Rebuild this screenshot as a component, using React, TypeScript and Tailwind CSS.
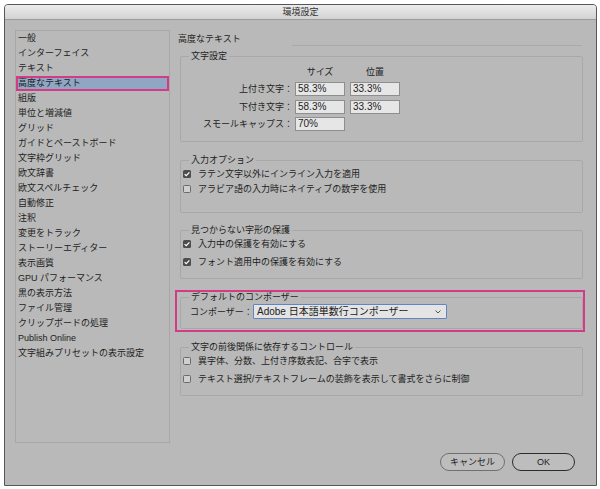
import React from "react";

const listItems = [
  "一般",
  "インターフェイス",
  "テキスト",
  "高度なテキスト",
  "組版",
  "単位と増減値",
  "グリッド",
  "ガイドとペーストボード",
  "文字枠グリッド",
  "欧文辞書",
  "欧文スペルチェック",
  "自動修正",
  "注釈",
  "変更をトラック",
  "ストーリーエディター",
  "表示画質",
  "GPU パフォーマンス",
  "黒の表示方法",
  "ファイル管理",
  "クリップボードの処理",
  "Publish Online",
  "文字組みプリセットの表示設定",
];

function Check({ checked }: { checked: boolean }) {
  if (checked) {
    return (
      <span className="w-[8px] h-[8px] rounded-[1.5px] bg-[#4d4d4d] flex items-center justify-center shrink-0">
        <svg width="8" height="8" viewBox="0 0 8 8">
          <path d="M1.6 4.1 L3.2 5.7 L6.4 2.3" fill="none" stroke="#ffffff" strokeWidth="1.2" />
        </svg>
      </span>
    );
  }
  return <span className="w-[8px] h-[8px] rounded-[1.5px] border border-[#6a6a6a] bg-[#cfcfcf] shrink-0" />;
}

function CheckRow({ checked, label, className }: { checked: boolean; label: string; className?: string }) {
  return (
    <div className={"flex items-center h-[14px] pl-[2px] gap-[7px] " + (className ?? "")}>
      <Check checked={checked} />
      <span className="leading-[14px] whitespace-nowrap">{label}</span>
    </div>
  );
}

function Field({ value }: { value: string }) {
  return (
    <div className="w-[50px] h-[14px] border border-[#8e8e8e] bg-[#e6e6e6] text-[10px] leading-[12px] pl-[2px] text-[#222]">
      {value}
    </div>
  );
}

export default function App() {
  return (
    <div className="w-[600px] h-[489px] bg-white pt-[4px] pl-[4px] font-['Liberation_Sans','Noto_Sans_CJK_JP',sans-serif] text-[9px] text-[#1d1d1d]">
      <div className="w-[593px] h-[482px] border border-[#575757] rounded-t-[4px] bg-[#b9b9b9] flex flex-col overflow-hidden">
        {/* title bar */}
        <div className="h-[15px] shrink-0 bg-gradient-to-b from-[#ececec] to-[#d2d2d2] border-b border-[#9c9c9c] flex items-center justify-center text-[#333] leading-[14px]">
          環境設定
        </div>

        <div className="flex">
          {/* list */}
          <div className="ml-[10px] mt-[10px] w-[155px] h-[413px] border border-[#a7a7a7] flex flex-col">
            {listItems.map((item) =>
              item === "高度なテキスト" ? (
                <div
                  key={item}
                  className="h-[15px] w-[153px] bg-[#8fa7c3] border-2 border-[#d43a86] leading-[11px] pl-[0px] whitespace-nowrap"
                >
                  {item}
                </div>
              ) : (
                <div key={item} className="h-[15px] leading-[15px] pl-[2px] whitespace-nowrap">
                  {item}
                </div>
              )
            )}
          </div>

          {/* right column */}
          <div className="ml-[8px] w-[406px] flex flex-col">
            <div className="mt-[11px] h-[15px] flex items-end">
              <span className="leading-[14px] h-[14px] whitespace-nowrap">高度なテキスト</span>
              <div className="ml-auto mr-[2px] w-[290px] h-px bg-[#a9a9a9]" />
            </div>

            {/* 文字設定 */}
            <fieldset className="mt-[3px] ml-[2px] w-[403px] h-[93px] border border-[#a8a8a8] rounded-[2px] p-0">
              <legend className="ml-[8px] px-[2px] leading-[14px]">文字設定</legend>
              <div className="flex mt-[2px] h-[14px] leading-[14px]">
                <div className="w-[112px] mr-[2px]" />
                <div className="w-[50px] text-center">サイズ</div>
                <div className="w-[50px] ml-[5px] text-center">位置</div>
              </div>
              <div className="flex items-center mt-[3px] h-[14px]">
                <div className="w-[112px] mr-[2px] text-right leading-[14px] whitespace-nowrap">上付き文字：</div>
                <Field value="58.3%" />
                <div className="ml-[5px]">
                  <Field value="33.3%" />
                </div>
              </div>
              <div className="flex items-center mt-[4px] h-[14px]">
                <div className="w-[112px] mr-[2px] text-right leading-[14px] whitespace-nowrap">下付き文字：</div>
                <Field value="58.3%" />
                <div className="ml-[5px]">
                  <Field value="33.3%" />
                </div>
              </div>
              <div className="flex items-center mt-[3px] h-[14px]">
                <div className="w-[112px] mr-[2px] text-right leading-[14px] whitespace-nowrap">スモールキャップス：</div>
                <Field value="70%" />
              </div>
            </fieldset>

            {/* 入力オプション */}
            <fieldset className="mt-[11px] ml-[2px] w-[403px] h-[60px] border border-[#a8a8a8] rounded-[2px] p-0">
              <legend className="ml-[8px] px-[2px] leading-[14px]">入力オプション</legend>
              <CheckRow checked={true} label="ラテン文字以外にインライン入力を適用" />
              <CheckRow checked={false} label="アラビア語の入力時にネイティブの数字を使用" className="mt-[1px]" />
            </fieldset>

            {/* 見つからない字形の保護 */}
            <fieldset className="mt-[10px] ml-[2px] w-[403px] h-[56px] border border-[#a8a8a8] rounded-[2px] p-0">
              <legend className="ml-[8px] px-[2px] leading-[14px]">見つからない字形の保護</legend>
              <CheckRow checked={true} label="入力中の保護を有効にする" />
              <CheckRow checked={true} label="フォント適用中の保護を有効にする" className="mt-[4px]" />
            </fieldset>

            {/* デフォルトのコンポーザー */}
            <div className="mt-[11px] -ml-[3px] w-[410px] h-[42px] border-2 border-[#d43a86] pl-[3px]">
              <fieldset className="w-[403px] h-[37px] border border-[#a8a8a8] rounded-[2px] p-0">
                <legend className="ml-[8px] px-[2px] leading-[10px]">デフォルトのコンポーザー</legend>
                <div className="flex items-center mt-[2px] pl-[9px] h-[15px]">
                  <span className="leading-[14px] w-[63px] shrink-0 whitespace-nowrap">コンポーザー：</span>
                  <div className="w-[194px] shrink-0 h-[15px] border border-[#5f86c4] bg-[#e4e4e4] rounded-[1px] flex items-center pl-[3px] pr-[5px] text-[10px] leading-[13px] text-[#222] whitespace-nowrap">
                    <span>Adobe 日本語単数行コンポーザー</span>
                    <svg className="ml-auto" width="6" height="4" viewBox="0 0 6 4">
                      <path d="M0.5 0.5 L3 3 L5.5 0.5" fill="none" stroke="#555" strokeWidth="1" />
                    </svg>
                  </div>
                </div>
              </fieldset>
            </div>

            {/* 文字の前後関係に依存するコントロール */}
            <fieldset className="mt-[8px] ml-[2px] w-[403px] h-[56px] border border-[#a8a8a8] rounded-[2px] p-0">
              <legend className="ml-[8px] px-[2px] leading-[14px]">文字の前後関係に依存するコントロール</legend>
              <CheckRow checked={false} label="異字体、分数、上付き序数表記、合字で表示" />
              <CheckRow checked={false} label="テキスト選択/テキストフレームの装飾を表示して書式をさらに制御" className="mt-[4px]" />
            </fieldset>
          </div>
        </div>

        {/* buttons */}
        <div className="mt-[10px] flex justify-end pr-[21px] gap-[7px]">
          <button className="w-[65px] h-[18px] rounded-full border border-[#707070] bg-[#bdbdbd] text-[9px] leading-[16px] text-[#222]">
            キャンセル
          </button>
          <button className="w-[63px] h-[18px] rounded-full border-[1.5px] border-[#2c2c2c] bg-[#bdbdbd] text-[9px] leading-[15px] text-[#222]">
            OK
          </button>
        </div>
      </div>
    </div>
  );
}
